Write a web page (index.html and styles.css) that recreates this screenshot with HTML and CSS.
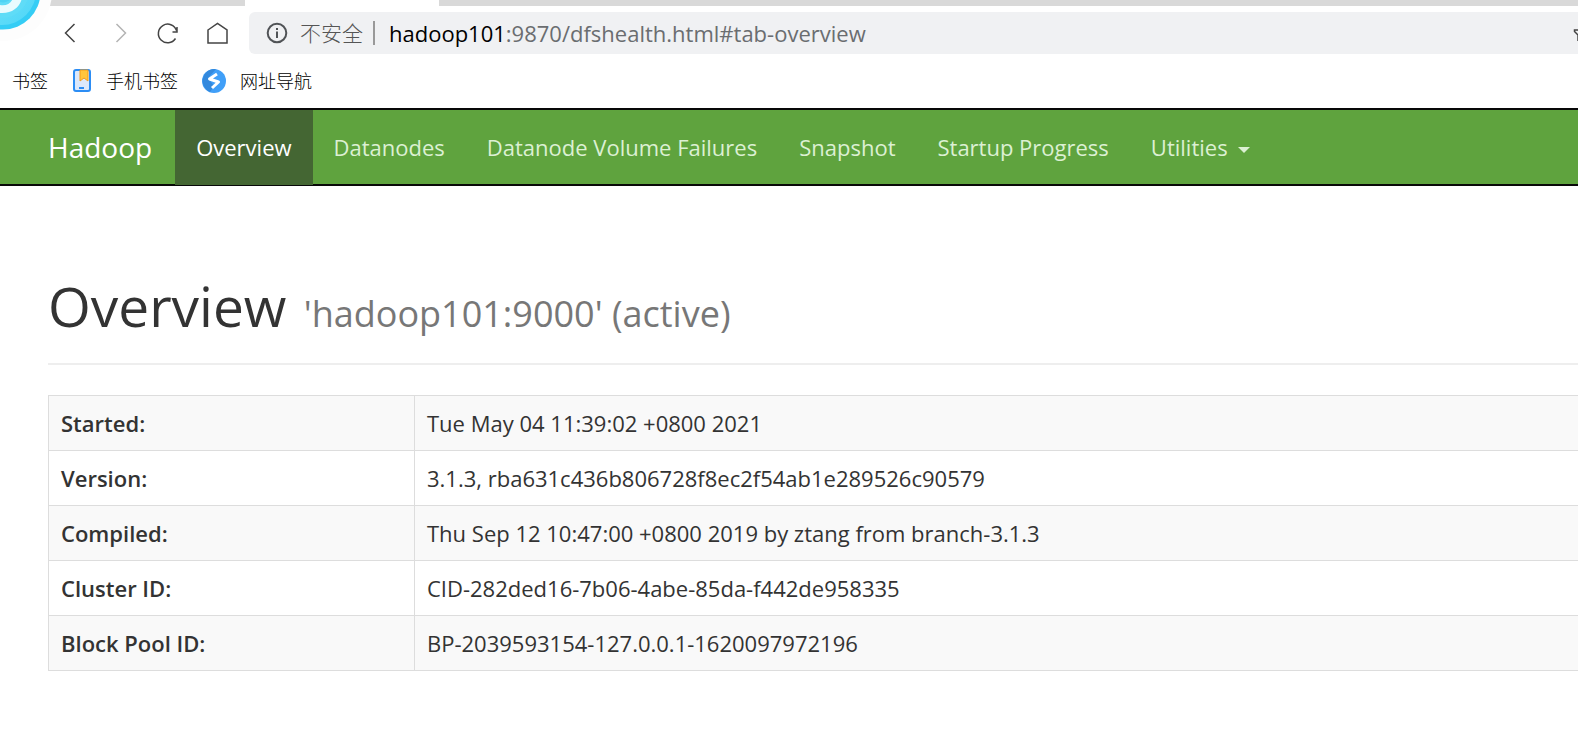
FILE: index.html
```html
<!DOCTYPE html>
<html lang="zh-CN">
<head>
<meta charset="utf-8">
<title>Namenode information</title>
<link rel="stylesheet" href="styles.css">
</head>
<body>
<header class="browser">
  <svg class="browser-logo" width="56" height="44" viewBox="0 0 56 44" aria-hidden="true">
    <defs>
      <linearGradient id="ring" x1="0" y1="0" x2="1" y2="1">
        <stop offset="0" stop-color="#7fe6fa"/>
        <stop offset="1" stop-color="#4ed6f7"/>
      </linearGradient>
    </defs>
    <circle cx="3" cy="-8" r="49" fill="#fdfdfd"/>
    <circle cx="3" cy="-8" r="37.500" fill="#35cdf5"/>
    <circle cx="2" cy="-9" r="34" fill="url(#ring)"/>
    <circle cx="2" cy="-9" r="27" fill="#5fdcf7"/>
    <path d="M0 13C12 14 20 7 22-2H13C11 4 6 6 0 5Z" fill="#e9fbfe"/>
    <path d="M0 2C4 3 8 2 11-1H0Z" fill="#4ed3f4"/>
  </svg>
  <div class="tabs"><span class="tab"></span><span class="tab tab-active"></span><span class="tab tab-rest"></span></div>
  <div class="toolbar">
    <div class="controls">
      <button class="control" aria-label="后退"><svg width="24" height="24" viewBox="0 0 24 24"><path d="M16.500 3L7.500 12L16.500 21" stroke="#444"/></svg></button>
      <button class="control" aria-label="前进"><svg width="24" height="24" viewBox="0 0 24 24"><path d="M9.500 3L18.500 12L9.500 21" stroke="#b4b4b4"/></svg></button>
      <button class="control" aria-label="刷新"><svg width="24" height="24" viewBox="0 0 24 24"><path d="M19.500 17.500A9.300 9.300 0 1 1 20.500 9.500M21 6V11H16.500" stroke="#444"/></svg></button>
      <button class="control" aria-label="主页"><svg width="24" height="24" viewBox="0 0 24 24"><path d="M3 9L12.500 2.500L22 9V22H3Z" stroke="#444"/></svg></button>
    </div>
    <div class="address">
      <svg class="info" width="22" height="22" viewBox="0 0 22 22" aria-hidden="true"><circle cx="11" cy="11" r="9.300" fill="none" stroke="#505356" stroke-width="2"/><path d="M10 9.500H12V16H10ZM10 6H12V8H10Z" fill="#505356"/></svg>
      <span class="security">不安全</span>
      <div class="url" role="textbox" aria-label="地址"><span class="host">hadoop101</span>:9870/dfshealth.html#tab-overview</div>
      <svg class="star" width="5" height="22" viewBox="0 0 5 22" aria-hidden="true"><path d="M6 8H1.500V9.500L5 13V19" fill="none" stroke="#444" stroke-width="1.500"/></svg>
    </div>
  </div>
  <nav class="bookmarks">
    <a class="bookmark" href="#bookmarks">书签</a>
    <a class="bookmark" href="#mobile">
      <svg width="20" height="24" viewBox="0 0 20 24" aria-hidden="true"><rect x="2" y="1" width="16" height="21" rx="2" fill="#dce8fb" stroke="#2c8df4" stroke-width="2"/><path d="M8 1H16V12L12 9L8 12Z" fill="#ffc53d" stroke="#f29b1d"/><path d="M7 19H12" stroke="#2c8df4" stroke-width="2"/></svg>
      手机书签</a>
    <a class="bookmark" href="#sites">
      <svg width="24" height="24" viewBox="0 0 24 24" aria-hidden="true"><circle cx="12" cy="12" r="12" fill="#409ff8"/><path d="M14 0A12 12 0 0 0 8 23L12 17L6 9Z" fill="#3389dd"/><path d="M15 5L7.500 10L16.500 13L10 19" fill="none" stroke="#fff" stroke-width="3" stroke-linejoin="round"/></svg>
      网址导航</a>
  </nav>
</header>
<nav class="navbar">
  <a class="brand" href="#hadoop">Hadoop</a>
  <a class="nav-link active" href="#tab-overview">Overview</a>
  <a class="nav-link" href="#tab-datanode">Datanodes</a>
  <a class="nav-link" href="#tab-volume-failures">Datanode Volume Failures</a>
  <a class="nav-link" href="#tab-snapshot">Snapshot</a>
  <a class="nav-link" href="#tab-startup-progress">Startup Progress</a>
  <button class="nav-link" aria-haspopup="true">Utilities<span class="caret"></span></button>
</nav>
<main class="content">
  <h1 class="title">Overview <small class="subtitle">'hadoop101:9000' (active)</small></h1>
  <table class="summary">
    <tbody>
      <tr><th scope="row">Started:</th><td>Tue May 04 11:39:02 +0800 2021</td></tr>
      <tr><th scope="row">Version:</th><td>3.1.3, rba631c436b806728f8ec2f54ab1e289526c90579</td></tr>
      <tr><th scope="row">Compiled:</th><td>Thu Sep 12 10:47:00 +0800 2019 by ztang from branch-3.1.3</td></tr>
      <tr><th scope="row">Cluster ID:</th><td>CID-282ded16-7b06-4abe-85da-f442de958335</td></tr>
      <tr><th scope="row">Block Pool ID:</th><td>BP-2039593154-127.0.0.1-1620097972196</td></tr>
    </tbody>
  </table>
</main>
</body>
</html>
```
FILE: styles.css
```css
* { box-sizing: border-box; }

body {
  margin: 0;
  background: #fff;
  color: #333;
  font: 22px/30px "Open Sans", "Noto Sans CJK SC", sans-serif;
}

a { color: inherit; text-decoration: none; }

button {
  border: 0;
  padding: 0;
  background: none;
  color: inherit;
  font: inherit;
}

/* Browser chrome */
.browser { position: relative; background: #fff; }
.browser-logo { position: absolute; top: 0; left: 0; }
.tabs { display: flex; height: 6px; padding-left: 40px; }
.tab { width: 205px; background: #d9d9d9; }
.tab-active { width: 194px; background: #fff; }
.tab-rest { flex: 1; }

.toolbar { display: flex; align-items: center; padding-top: 6px; }
.controls { display: flex; gap: 25px; padding: 0 20px 0 58px; }
.control { display: flex; }
.control svg { fill: none; stroke-width: 1.5; }

.address {
  display: flex;
  flex: 1;
  align-items: center;
  height: 42px;
  padding-left: 17px;
  border-radius: 6px 0 0 6px;
  background: #f0f1f3;
  color: #6a6d70;
}
.security {
  margin-left: 12px;
  padding-right: 10px;
  border-right: 2px solid #999;
  font-size: 21px;
  line-height: 24px;
  font-weight: 300;
  color: #555;
}
.url { flex: 1; padding-left: 14px; white-space: nowrap; }
.host { color: #000; }

.bookmarks {
  display: flex;
  align-items: center;
  gap: 24px;
  height: 54px;
  padding-left: 12px;
  color: #000;
  font-size: 18px;
  font-weight: 300;
}
.bookmark { display: flex; align-items: center; gap: 14px; }

/* Hadoop navigation */
.navbar {
  display: flex;
  height: 78px;
  padding-left: 48px;
  border: solid #080808;
  border-width: 2px 0;
  background: #5fa33e;
  color: #dcf0d3;
}
.brand {
  padding: 22px 23px 22px 0;
  color: #fff;
  font-size: 28px;
}
.nav-link { height: 75px; padding: 22px 21px 23px; white-space: nowrap; }
.active { background: #446633; color: #fff; }
.caret {
  display: inline-block;
  margin-left: 10px;
  border: 6px solid transparent;
  border-top-color: currentColor;
  border-bottom: 0;
  vertical-align: middle;
}

/* Overview */
.content { padding: 84px 0 56px 48px; }
.title {
  margin: 0 0 30px;
  padding-bottom: 21px;
  border-bottom: 2px solid #eee;
  font-size: 55px;
  font-weight: 400;
  line-height: 72px;
}
.subtitle { margin-left: 3px; color: #777; font-size: 36px; line-height: 1; }

.summary {
  width: 100%;
  border-collapse: collapse;
  table-layout: fixed;
}
.summary th,
.summary td {
  padding: 12px;
  border: 1px solid #ddd;
  border-right: 0;
  text-align: left;
}
.summary th { width: 366px; font-weight: 600; }
.summary tr:nth-child(odd) { background: #f9f9f9; }
```
